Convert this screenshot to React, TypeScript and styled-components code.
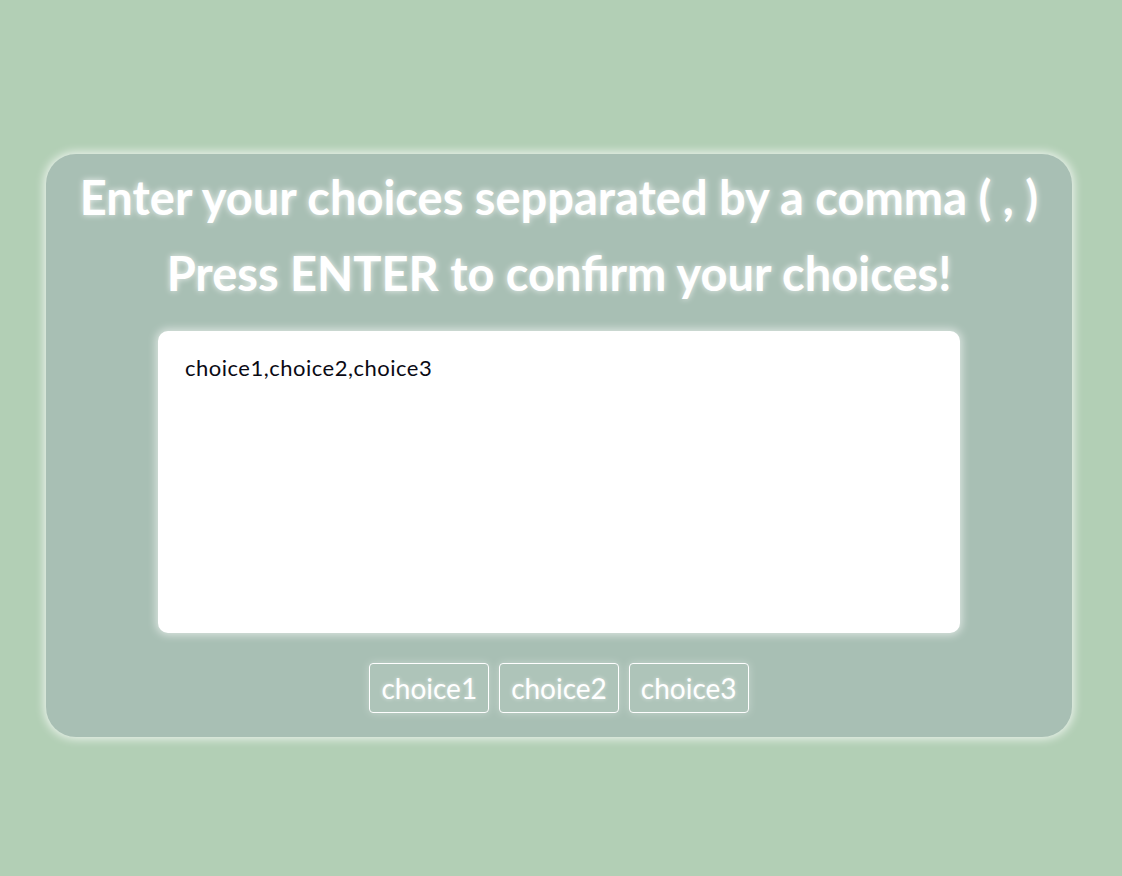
import React from "react";
import styled, { createGlobalStyle } from "styled-components";

const GlobalStyle = createGlobalStyle`
  html, body {
    margin: 0;
    padding: 0;
    background: #b2cfb5;
  }
  body {
    font-family: Lato, "Noto Sans", sans-serif;
  }
`;

const Page = styled.main`
  min-height: 100vh;
  box-sizing: border-box;
  display: flex;
  align-items: flex-start;
  justify-content: center;
  padding-top: 154px;
`;

const Card = styled.section`
  width: 1026px;
  box-sizing: border-box;
  margin-left: -4px;
  padding: 5px 0 24px;
  background: #a8bfb4;
  border-radius: 30px;
  box-shadow: 0 0 10px 2px rgba(255, 255, 255, 0.75);
  display: flex;
  flex-direction: column;
  align-items: center;
`;

const Heading = styled.h1`
  margin: 0;
  font-family: Lato, sans-serif;
  font-weight: 700;
  font-size: 47px;
  line-height: 76px;
  color: #ffffff;
  text-align: center;
  white-space: nowrap;
  text-shadow: 0 0 6px rgba(255, 255, 255, 0.8);
`;

const Input = styled.textarea`
  margin-top: 20px;
  width: 802px;
  height: 302px;
  box-sizing: border-box;
  padding: 23px 27px;
  border: none;
  border-radius: 10px;
  background: #ffffff;
  resize: none;
  outline: none;
  font-family: Lato, sans-serif;
  font-size: 22px;
  letter-spacing: 0.5px;
  color: #0a0a14;
  box-shadow: 0 0 8px 2px rgba(255, 255, 255, 0.6);
`;

const ChipRow = styled.div`
  margin-top: 30px;
  display: flex;
  gap: 10px;
`;

const Chip = styled.span`
  height: 50px;
  box-sizing: border-box;
  padding: 0 11px;
  display: flex;
  align-items: center;
  border: 1px solid #ffffff;
  border-radius: 4px;
  background: rgba(255, 255, 255, 0.08);
  color: #ffffff;
  font-family: Lato, sans-serif;
  font-size: 28px;
  text-shadow: 0 0 4px rgba(255, 255, 255, 0.6);
  box-shadow: 0 0 8px rgba(255, 255, 255, 0.35);
`;

const choices = ["choice1", "choice2", "choice3"];

export default function App() {
  return (
    <>
      <GlobalStyle />
      <Page>
        <Card>
          <Heading>Enter your choices sepparated by a comma ( , )</Heading>
          <Heading>Press ENTER to confirm your choices!</Heading>
          <Input defaultValue="choice1,choice2,choice3" spellCheck={false} />
          <ChipRow>
            {choices.map((c) => (
              <Chip key={c}>{c}</Chip>
            ))}
          </ChipRow>
        </Card>
      </Page>
    </>
  );
}
